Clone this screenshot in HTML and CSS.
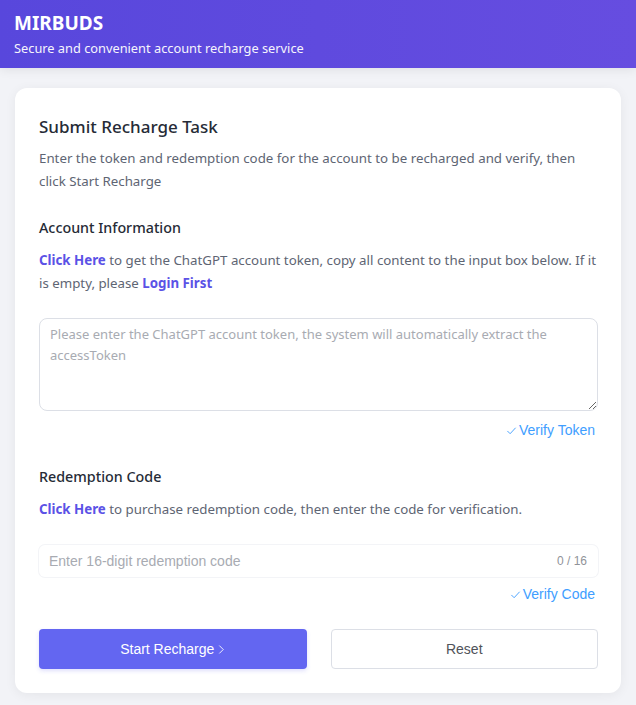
FILE: index.html
```html
<!DOCTYPE html>
<html lang="en">
<head>
  <meta charset="UTF-8" />
  <meta name="viewport" content="width=device-width, initial-scale=1" />
  <title>MIRBUDS</title>
  <link rel="stylesheet" href="styles.css">
</head>
<body>

  <!-- Header -->
  <header class="topbar">
    <h1>MIRBUDS</h1>
    <p>Secure and convenient account recharge service</p>
  </header>

  <main class="page">
    <div class="card">
      <h2 class="card-title">Submit Recharge Task</h2>
      <p class="desc">Enter the token and redemption code for the account to be recharged and verify, then click Start Recharge</p>

      <!-- Account -->
      <section class="block">
        <h3>Account Information</h3>
        <p class="hint"><a href="#">Click Here</a> to get the ChatGPT account token, copy all content to the input box below. If it is empty, please <a href="#">Login First</a></p>
        <textarea class="token-input" placeholder="Please enter the ChatGPT account token, the system will automatically extract the accessToken"></textarea>
        <div class="verify-row">
          <button class="link-btn">
            <svg viewBox="0 0 12 12" width="11" height="11"><path d="M1.5 6.5 L4.5 9.5 L10.5 3" fill="none" stroke="currentColor" stroke-width="1"/></svg>
            Verify Token
          </button>
        </div>
      </section>

      <!-- Code -->
      <section class="block">
        <h3>Redemption Code</h3>
        <p class="hint"><a href="#">Click Here</a> to purchase redemption code, then enter the code for verification.</p>
        <div class="code-input">
          <input type="text" placeholder="Enter 16-digit redemption code" />
          <span class="count">0 / 16</span>
        </div>
        <div class="verify-row">
          <button class="link-btn">
            <svg viewBox="0 0 12 12" width="11" height="11"><path d="M1.5 6.5 L4.5 9.5 L10.5 3" fill="none" stroke="currentColor" stroke-width="1"/></svg>
            Verify Code
          </button>
        </div>
      </section>

      <div class="actions">
        <button class="btn primary">Start Recharge
          <svg viewBox="0 0 8 12" width="7" height="11"><path d="M1.5 1.5 L6 6 L1.5 10.5" fill="none" stroke="currentColor" stroke-width="1"/></svg>
        </button>
        <button class="btn plain">Reset</button>
      </div>
    </div>
  </main>

</body>
</html>
```

FILE: styles.css
```css
* { box-sizing: border-box; margin: 0; padding: 0; }
body {
  font-family: 'Noto Sans', 'Open Sans', sans-serif;
  background: #f2f3f7;
  color: #303133;
}
.topbar {
  background: linear-gradient(90deg, #5847dc, #664de0);
  color: #fff;
  padding: 10px 14px 0;
  height: 68px;
  box-shadow: 0 2px 10px rgba(0,0,0,0.08);
}
.topbar h1 {
  font-size: 19px;
  font-weight: 700;
  line-height: 26px;
}
.topbar p {
  font-size: 12.8px;
  line-height: 22px;
  margin-top: 1px;
  opacity: 0.95;
}
.page { padding: 20px 15px 12px; }
.card {
  background: #fff;
  border-radius: 12px;
  padding: 26px 23px 24px 24px;
  box-shadow: 0 2px 12px rgba(0,0,0,0.06);
}
.card-title {
  font-size: 17px;
  font-weight: 500;
  color: #262b36;
  line-height: 26px;
}
.desc {
  margin-top: 7px;
  font-size: 13.3px;
  line-height: 23px;
  color: #5e6573;
}
.block { margin-top: 24px; }
.block + .block { margin-top: 26px; }
.block h3 {
  font-size: 14.3px;
  font-weight: 500;
  color: #262b36;
  line-height: 22px;
}
.hint {
  margin-top: 10px;
  font-size: 13.3px;
  line-height: 23px;
  color: #5e6573;
}
.hint a {
  color: #5b52e6;
  font-weight: 700;
  text-decoration: none;
}
.token-input {
  display: block;
  margin-top: 23px;
  width: 100%;
  height: 93px;
  border: 1px solid #dcdfe6;
  border-radius: 8px;
  padding: 5px 10px;
  font-family: 'Noto Sans', sans-serif;
  font-size: 13px;
  line-height: 21px;
  color: #303133;
  resize: vertical;
  outline: none;
}
.token-input::placeholder { color: #a8abb2; }
.verify-row {
  display: flex;
  justify-content: flex-end;
  margin-top: 9px;
  padding-right: 3px;
}
.link-btn {
  display: flex;
  align-items: center;
  gap: 2px;
  background: none;
  border: none;
  color: #409eff;
  font-family: 'Liberation Sans', Arial, sans-serif;
  font-size: 14px;
  line-height: 20px;
  cursor: pointer;
}
.code-input {
  margin-top: 24px;
  display: flex;
  align-items: center;
  height: 32px;
  border-radius: 6px;
  box-shadow: 0 0 0 1px #f3f4f7;
  padding: 0 11px 0 10px;
}
.code-input + .verify-row { margin-top: 7px; }
.code-input input {
  flex: 1;
  border: none;
  outline: none;
  background: none;
  font-family: 'Liberation Sans', Arial, sans-serif;
  font-size: 14px;
  color: #303133;
}
.code-input input::placeholder { color: #a8abb2; }
.count {
  font-family: 'Liberation Sans', Arial, sans-serif;
  font-size: 12px;
  color: #909399;
}
.actions {
  display: grid;
  grid-template-columns: 1fr 1fr;
  gap: 24px;
  margin-top: 25px;
}
.btn {
  height: 40px;
  border-radius: 4px;
  font-family: 'Liberation Sans', Arial, sans-serif;
  font-size: 14px;
  display: flex;
  align-items: center;
  justify-content: center;
  gap: 4px;
  cursor: pointer;
}
.btn.primary {
  background: #6366f1;
  color: #fff;
  border: none;
  box-shadow: 0 2px 4px rgba(99,102,241,0.2);
}
.btn.plain {
  background: #fff;
  color: #505359;
  border: 1px solid #dcdfe6;
}
```
